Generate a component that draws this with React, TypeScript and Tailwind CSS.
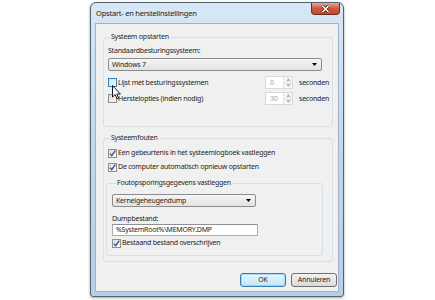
import React from 'react';

// Component - CheckBox
function CheckBox({ checked = false, hover = false }: { checked?: boolean; hover?: boolean }) {
    return (
        <span
            className={
                hover
                    ? 'flex h-[9px] w-[9px] shrink-0 items-center justify-center border border-[#3c7fb1] bg-gradient-to-br from-[#c9e6f8] to-[#eef8fe]'
                    : 'flex h-[9px] w-[9px] shrink-0 items-center justify-center border border-[#8f8f8f] bg-gradient-to-br from-[#dcdcdc] to-[#fbfbfb]'
            }
        >
            {checked && (
                <svg width="7" height="7" viewBox="0 0 7 7">
                    <path d="M0.9 3.6 L2.7 5.6 L6.2 0.6" fill="none" stroke="#31508f" strokeWidth="1.3" />
                </svg>
            )}
        </span>
    );
}

// Component - Spinner (disabled)
function Spinner({ value }: { value: string }) {
    return (
        <div className="flex h-[13px] w-[28px] shrink-0 border border-[#d9d9d9] bg-white">
            <span className="flex-1 pl-[4px] leading-[11px] text-[#a6a6a6]">{value}</span>
            <div className="flex w-[9px] flex-col border-l border-[#e3e3e3] bg-[#f7f7f7]">
                <span className="flex flex-1 items-center justify-center border-b border-[#e3e3e3]">
                    <svg width="5" height="3" viewBox="0 0 5 3">
                        <path d="M0 3 L2.5 0 L5 3 Z" fill="#b8b8b8" />
                    </svg>
                </span>
                <span className="flex flex-1 items-center justify-center">
                    <svg width="5" height="3" viewBox="0 0 5 3">
                        <path d="M0 0 L2.5 3 L5 0 Z" fill="#b8b8b8" />
                    </svg>
                </span>
            </div>
        </div>
    );
}

// Component - Select
function Select({ value, width }: { value: string; width: string }) {
    return (
        <div
            className={`flex h-[13px] ${width} items-center justify-between rounded-[2px] border border-[#8c8c8c] bg-gradient-to-b from-[#f6f6f6] to-[#e2e2e2] pl-[3px] pr-[4px]`}
        >
            <span className="leading-[11px]">{value}</span>
            <svg width="5" height="3" viewBox="0 0 5 3">
                <path d="M0 0 L2.5 3 L5 0 Z" fill="#000" />
            </svg>
        </div>
    );
}

// Component - App
export default function App() {
    return (
        <div className="relative h-[300px] w-[435px] overflow-hidden bg-white pt-[2px] font-['Noto_Sans',sans-serif] text-[7px] tracking-[-0.22px] text-[#1e1e1e]">
            {/* Window */}
            <div className="ml-[90px] flex h-[295px] w-[254px] flex-col rounded-t-[6px] rounded-b-[3px] border border-[#52626f] bg-gradient-to-b from-[#d8e7f5] via-[#c3d7ec] to-[#b7cee7] shadow-[0_1px_3px_rgba(0,0,0,0.35)]">
                {/* Title bar */}
                <div className="flex h-[20px] shrink-0 pl-[5px] pr-[3px]">
                    <span className="self-center text-[7.5px] leading-[10px] text-[#1a1a1a]">Opstart- en herstelinstellingen</span>
                    <div className="ml-auto flex h-[12px] w-[29px] items-center justify-center rounded-b-[4px] border border-t-0 border-[#6f2b1f] bg-gradient-to-b from-[#e7a898] via-[#d0573e] to-[#c24a30]">
                        <svg width="9" height="8" viewBox="0 0 9 8">
                            <path d="M1.5 1 L7.5 7 M7.5 1 L1.5 7" stroke="#4a1a12" strokeWidth="3" />
                            <path d="M1.5 1 L7.5 7 M7.5 1 L1.5 7" stroke="#ffffff" strokeWidth="1.6" />
                        </svg>
                    </div>
                </div>

                {/* Content */}
                <div className="mx-[4px] mb-[4px] flex flex-1 flex-col border border-[#9fb3c8] bg-[#f0f0f0] pl-[7px] pr-[5px] pt-[8px]">
                    {/* Systeem opstarten */}
                    <fieldset className="w-[230px] rounded-[3px] border border-[#d5dfe5] pb-[21px] pl-[4px]">
                        <legend className="ml-[2px] px-[1px] leading-[10px]">Systeem opstarten</legend>
                        <div className="mt-[4px] leading-[10px]">Standaardbesturingssysteem:</div>
                        <div className="mt-[2px]">
                            <Select value="Windows 7" width="w-[214px]" />
                        </div>
                        <div className="mt-[5px] flex items-center">
                            <div className="flex w-[157px] items-center gap-[1px]">
                                <CheckBox hover />
                                <span className="leading-[10px]">Lijst met besturingssystemen</span>
                            </div>
                            <Spinner value="0" />
                            <span className="ml-[6px] leading-[10px]">seconden</span>
                        </div>
                        <div className="mt-[3px] flex items-center">
                            <div className="flex w-[157px] items-center gap-[1px]">
                                <CheckBox />
                                <span className="leading-[10px]">Herstelopties (indien nodig)</span>
                            </div>
                            <Spinner value="30" />
                            <span className="ml-[6px] leading-[10px]">seconden</span>
                        </div>
                    </fieldset>

                    {/* Systeemfouten */}
                    <fieldset className="mt-[6px] w-[230px] rounded-[3px] border border-[#d5dfe5] pb-[5px] pl-[4px]">
                        <legend className="ml-[2px] px-[1px] leading-[10px]">Systeemfouten</legend>
                        <div className="mt-[5px] flex items-center gap-[1px]">
                            <CheckBox checked />
                            <span className="leading-[10px]">Een gebeurtenis in het systeemlogboek vastleggen</span>
                        </div>
                        <div className="mt-[4px] flex items-center gap-[1px]">
                            <CheckBox checked />
                            <span className="leading-[10px]">De computer automatisch opnieuw opstarten</span>
                        </div>

                        <fieldset className="-ml-[2px] mt-[6px] w-[217px] rounded-[3px] border border-[#d5dfe5] pb-[7px] pl-[5px]">
                            <legend className="ml-[4px] px-[1px] leading-[10px]">Foutopsporingsgegevens vastleggen</legend>
                            <div className="mt-[6px]">
                                <Select value="Kernelgeheugendump" width="w-[144px]" />
                            </div>
                            <div className="mt-[7px] leading-[10px]">Dumpbestand:</div>
                            <div className="flex h-[12px] w-[146px] items-center border border-[#abadb3] border-t-[#8e9095] bg-white pl-[3px]">
                                <span className="leading-[10px]">%SystemRoot%\MEMORY.DMP</span>
                            </div>
                            <div className="mt-[2px] flex items-center gap-[1px]">
                                <CheckBox checked />
                                <span className="leading-[10px]">Bestaand bestand overschrijven</span>
                            </div>
                        </fieldset>
                    </fieldset>

                    {/* Buttons */}
                    <div className="mt-[11px] flex w-[234px] justify-end gap-[5px]">
                        <button className="h-[14px] w-[46px] rounded-[3px] border border-[#3c7fb1] bg-gradient-to-b from-[#eaf6fd] to-[#bee6fd] leading-[12px] shadow-[inset_0_0_0_1px_rgba(120,200,250,0.6)]">
                            OK
                        </button>
                        <button className="h-[14px] w-[46px] rounded-[3px] border border-[#707070] bg-gradient-to-b from-[#f2f2f2] to-[#dadada] leading-[12px]">
                            Annuleren
                        </button>
                    </div>
                </div>
            </div>

            {/* Mouse cursor */}
            <svg className="absolute left-[112px] top-[85px]" width="9" height="15" viewBox="0 0 9 15">
                <path d="M0.5 0.5 L0.5 12 L3.2 9.6 L5 13.8 L6.6 13.1 L4.9 9 L8.4 9 Z" fill="#ffffff" stroke="#000000" strokeWidth="0.9" strokeLinejoin="round" />
            </svg>
        </div>
    );
}
